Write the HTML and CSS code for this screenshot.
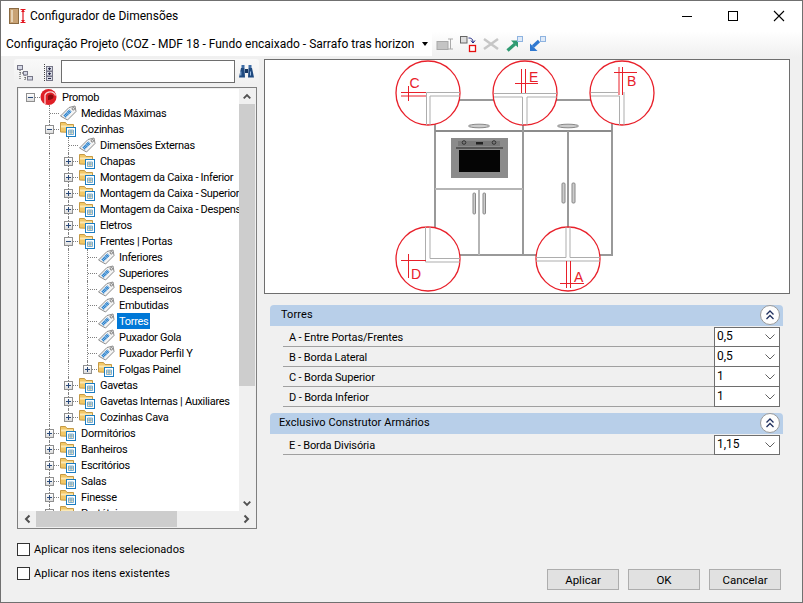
FILE: index.html
```html
<!DOCTYPE html>
<html lang="pt">
<head>
<meta charset="utf-8">
<title>Configurador de Dimensões</title>
<link rel="stylesheet" href="styles.css">
</head>
<body>
<svg class="defs" width="0" height="0">
  <symbol id="tag" viewBox="0 0 19 16">
    <path d="M1.500 11 10 2.500l6-1.500 1 5.500-8.500 8.500z" fill="#f4f4f4" stroke="#8c8c8c"/>
    <path d="M5.500 11.500 11.500 5.500" stroke="#1f7ccc" stroke-width="3.500" stroke-dasharray="1.200 .4"/>
    <circle cx="14.300" cy="3.800" r="1.200" fill="#fff" stroke="#777"/>
  </symbol>
  <symbol id="folder" viewBox="0 0 19 16">
    <path d="M1.500 11V1.500h5l1.500 2h6.500v8z" fill="#f3c867" stroke="#c59a45"/>
    <path d="M2 5.500h12" stroke="#fbe8b4" stroke-width="2"/>
    <rect x="7.500" y="6.500" width="9" height="9" fill="#fff" stroke="#1b7cc0"/>
    <path d="M9.500 9h5v4.500h-5zM12 9v4.500M9.500 11h5" fill="#fde5b6" stroke="#5aa0d0" stroke-width=".8"/>
  </symbol>
  <symbol id="logo" viewBox="0 0 19 16">
    <circle cx="8.500" cy="8" r="8" fill="#df1f26"/>
    <path d="M5 15V6C7 1.500 14 2 15.500 6.500" fill="none" stroke="#fbd5d6" stroke-width="1.300"/>
    <path d="M8 11V7c2-2.500 6-1.500 5.500 1-.4 2.200-3.500 3-5.500 3z" fill="#8a0c10"/>
  </symbol>
  <symbol id="chev-up" viewBox="0 0 16 16"><path d="M4.500 10 8 6.500 11.500 10" fill="none" stroke="#505050" stroke-width="2"/></symbol>
  <symbol id="chev-down" viewBox="0 0 16 16"><path d="M4.500 6 8 9.500 11.500 6" fill="none" stroke="#505050" stroke-width="2"/></symbol>
  <symbol id="chev-left" viewBox="0 0 16 16"><path d="M10 4.500 6.500 8 10 11.500" fill="none" stroke="#505050" stroke-width="2"/></symbol>
  <symbol id="chev-right" viewBox="0 0 16 16"><path d="M6 4.500 9.500 8 6 11.500" fill="none" stroke="#505050" stroke-width="2"/></symbol>
  <symbol id="dd" viewBox="0 0 12 8"><path d="M1.500 1.500 6 6l4.500-4.500" fill="none" stroke="#606060"/></symbol>
  <symbol id="collapse" viewBox="0 0 24 22">
    <circle cx="12" cy="11" r="9.500" fill="#fdfdfd" stroke="#9a9a9a"/>
    <path d="M8.500 10.500 12 7l3.500 3.500M8.500 15 12 11.500 15.500 15" fill="none" stroke="#1f2f5f" stroke-width="1.300"/>
  </symbol>
</svg>

<div class="window">
  <header class="titlebar">
    <svg class="title-icon" viewBox="0 0 18 17" width="18" height="17">
      <rect x=".5" y=".5" width="9" height="15" fill="#c8a274" stroke="#8a6a42"/>
      <rect x="2" y="2" width="2" height="12" fill="#e6d2b5"/>
      <path d="M14 1v14M11.500 1.500h5M11.500 14.500h5" stroke="#e3141e" stroke-width="1.200" fill="none"/>
      <path d="M12 4l2-2.500L16 4zM12 12l2 2.500 2-2.500z" fill="#e3141e"/>
    </svg>
    <span class="title-text">Configurador de Dimensões</span>
    <div class="win-buttons">
      <svg viewBox="0 0 12 12" width="12" height="12"><path d="M1 6.500h10" stroke="#000"/></svg>
      <svg viewBox="0 0 12 12" width="12" height="12"><rect x="1.500" y="1.500" width="9" height="9" fill="none" stroke="#000"/></svg>
      <svg viewBox="0 0 12 12" width="12" height="12"><path d="M1 1l10 10M11 1 1 11" stroke="#000" stroke-width="1.100"/></svg>
    </div>
  </header>

  <div class="toolbar">
    <div class="combo">
      <span class="combo-text">Configuração Projeto (COZ - MDF 18 - Fundo encaixado - Sarrafo tras horizontal)</span>
      <span class="combo-arrow"></span>
    </div>
    <div class="tools">
      <svg viewBox="0 0 18 18" width="18" height="18"><rect x="1" y="6.500" width="11" height="8" fill="#c4c4c4" stroke="#a8a8a8"/><path d="M12 4h5M14.500 4v10M12 14h5" stroke="#aaa" fill="none"/></svg>
      <svg viewBox="0 0 18 18" width="18" height="18"><rect x="1.500" y="1.500" width="6.500" height="6.500" fill="#ddd" stroke="#666"/><rect x="10.500" y="10.500" width="6" height="6" fill="#fff" stroke="#e51010" stroke-width="1.300"/><path d="M9.500 3c3 0 4.500 1 4.500 4.500M12 5.500 14 8l2-2.500" stroke="#141c7c" fill="none"/></svg>
      <svg viewBox="0 0 18 18" width="18" height="18"><path d="M2 4l14 10M16 4 2 14" stroke="#c6c6c6" stroke-width="2.500"/></svg>
      <svg viewBox="0 0 18 18" width="18" height="18"><path d="M2.500 15.500 10 9" stroke="#2f9a72" stroke-width="3.200"/><path d="M6 5.500h7v7z" fill="#2f9a72"/><rect x="12.500" y="1.500" width="5" height="5" fill="#dfeaf8" stroke="#8eb3e0"/></svg>
      <svg viewBox="0 0 18 18" width="18" height="18"><path d="M11 6 5 11.500" stroke="#2f78d0" stroke-width="3.200"/><path d="M2 8.500V16h7.500z" fill="#2f78d0"/><rect x="12.500" y="1.500" width="5" height="5" fill="#dfeaf8" stroke="#8eb3e0"/></svg>
    </div>
  </div>

  <div class="main">
    <aside class="left">
      <div class="search-bar">
        <svg viewBox="0 0 16 18" width="16" height="18"><path d="M3 5v12M3 10h3M8 10v7M8 15h3" stroke="#444" stroke-dasharray="1 1" fill="none"/><rect x=".5" y="2.500" width="5" height="4" fill="#d6d9e6" stroke="#778"/><rect x="6.500" y="8.500" width="4" height="3.500" fill="#d6d9e6" stroke="#778"/><rect x="10.500" y="13.500" width="5" height="3.500" fill="#d6d9e6" stroke="#778"/></svg>
        <svg viewBox="0 0 16 18" width="16" height="18"><path d="M4.500 1v17" stroke="#444" stroke-dasharray="1 1"/><rect x="6.500" y="3.500" width="6" height="4.500" fill="#d8dbe4" stroke="#778"/><rect x="6.500" y="8.500" width="6" height="4.500" fill="#d8dbe4" stroke="#778"/><rect x="6.500" y="13.500" width="6" height="4" fill="#d8dbe4" stroke="#778"/><path d="M8 5.700h3M9.500 4.500v2.500M8 10.700h3M9.500 9.500v2.500M8 15.500h3" stroke="#224"/></svg>
        <input class="search" type="text" aria-label="Pesquisar">
        <svg class="binoc" viewBox="0 0 17 15" width="17" height="15"><path d="M1 13.500 3 4h3.500l.5 9.500zM10 13.500 10.500 4H14l2 9.500z" fill="#1f4a80"/><rect x="3.500" y="1" width="3" height="3" fill="#3f6da5"/><rect x="10.500" y="1" width="3" height="3" fill="#3f6da5"/><rect x="7" y="5" width="3" height="4" fill="#153560"/><path d="M2.800 7.500v4M12.500 7.500v4" stroke="#9fc0e6"/></svg>
      </div>

      <div class="tree">
        <div class="viewport">
          <div class="row"><span class="c root"><i class="box minus"></i></span><svg class="ico"><use href="#logo"/></svg><span class="lbl">Promob</span></div>
          <div class="row"><span class="c"></span><span class="c tee"></span><svg class="ico"><use href="#tag"/></svg><span class="lbl">Medidas Máximas</span></div>

          <div class="row"><span class="c"></span><span class="c tee"><i class="box minus"></i></span><svg class="ico"><use href="#folder"/></svg><span class="lbl">Cozinhas</span></div>
          <div class="row"><span class="c"></span><span class="c ln"></span><span class="c tee"></span><svg class="ico"><use href="#tag"/></svg><span class="lbl">Dimensões Externas</span></div>
          <div class="row"><span class="c"></span><span class="c ln"></span><span class="c tee"><i class="box plus"></i></span><svg class="ico"><use href="#folder"/></svg><span class="lbl">Chapas</span></div>
          <div class="row"><span class="c"></span><span class="c ln"></span><span class="c tee"><i class="box plus"></i></span><svg class="ico"><use href="#folder"/></svg><span class="lbl">Montagem da Caixa - Inferior</span></div>
          <div class="row"><span class="c"></span><span class="c ln"></span><span class="c tee"><i class="box plus"></i></span><svg class="ico"><use href="#folder"/></svg><span class="lbl">Montagem da Caixa - Superior</span></div>
          <div class="row"><span class="c"></span><span class="c ln"></span><span class="c tee"><i class="box plus"></i></span><svg class="ico"><use href="#folder"/></svg><span class="lbl">Montagem da Caixa - Despenseiro</span></div>
          <div class="row"><span class="c"></span><span class="c ln"></span><span class="c tee"><i class="box plus"></i></span><svg class="ico"><use href="#folder"/></svg><span class="lbl">Eletros</span></div>
          <div class="row"><span class="c"></span><span class="c ln"></span><span class="c tee"><i class="box minus"></i></span><svg class="ico"><use href="#folder"/></svg><span class="lbl">Frentes | Portas</span></div>

          <div class="row"><span class="c"></span><span class="c ln"></span><span class="c ln"></span><span class="c tee"></span><svg class="ico"><use href="#tag"/></svg><span class="lbl">Inferiores</span></div>
          <div class="row"><span class="c"></span><span class="c ln"></span><span class="c ln"></span><span class="c tee"></span><svg class="ico"><use href="#tag"/></svg><span class="lbl">Superiores</span></div>
          <div class="row"><span class="c"></span><span class="c ln"></span><span class="c ln"></span><span class="c tee"></span><svg class="ico"><use href="#tag"/></svg><span class="lbl">Despenseiros</span></div>
          <div class="row"><span class="c"></span><span class="c ln"></span><span class="c ln"></span><span class="c tee"></span><svg class="ico"><use href="#tag"/></svg><span class="lbl">Embutidas</span></div>
          <div class="row"><span class="c"></span><span class="c ln"></span><span class="c ln"></span><span class="c tee"></span><svg class="ico"><use href="#tag"/></svg><span class="lbl sel">Torres</span></div>
          <div class="row"><span class="c"></span><span class="c ln"></span><span class="c ln"></span><span class="c tee"></span><svg class="ico"><use href="#tag"/></svg><span class="lbl">Puxador Gola</span></div>
          <div class="row"><span class="c"></span><span class="c ln"></span><span class="c ln"></span><span class="c tee"></span><svg class="ico"><use href="#tag"/></svg><span class="lbl">Puxador Perfil Y</span></div>
          <div class="row"><span class="c"></span><span class="c ln"></span><span class="c ln"></span><span class="c end"><i class="box plus"></i></span><svg class="ico"><use href="#folder"/></svg><span class="lbl">Folgas Painel</span></div>

          <div class="row"><span class="c"></span><span class="c ln"></span><span class="c tee"><i class="box plus"></i></span><svg class="ico"><use href="#folder"/></svg><span class="lbl">Gavetas</span></div>
          <div class="row"><span class="c"></span><span class="c ln"></span><span class="c tee"><i class="box plus"></i></span><svg class="ico"><use href="#folder"/></svg><span class="lbl">Gavetas Internas | Auxiliares</span></div>
          <div class="row"><span class="c"></span><span class="c ln"></span><span class="c end"><i class="box plus"></i></span><svg class="ico"><use href="#folder"/></svg><span class="lbl">Cozinhas Cava</span></div>

          <div class="row"><span class="c"></span><span class="c tee"><i class="box plus"></i></span><svg class="ico"><use href="#folder"/></svg><span class="lbl">Dormitórios</span></div>
          <div class="row"><span class="c"></span><span class="c tee"><i class="box plus"></i></span><svg class="ico"><use href="#folder"/></svg><span class="lbl">Banheiros</span></div>
          <div class="row"><span class="c"></span><span class="c tee"><i class="box plus"></i></span><svg class="ico"><use href="#folder"/></svg><span class="lbl">Escritórios</span></div>
          <div class="row"><span class="c"></span><span class="c tee"><i class="box plus"></i></span><svg class="ico"><use href="#folder"/></svg><span class="lbl">Salas</span></div>
          <div class="row"><span class="c"></span><span class="c tee"><i class="box plus"></i></span><svg class="ico"><use href="#folder"/></svg><span class="lbl">Finesse</span></div>
          <div class="row"><span class="c"></span><span class="c tee"><i class="box plus"></i></span><svg class="ico"><use href="#folder"/></svg><span class="lbl">Portáteis</span></div>
        </div>
        <div class="vbar">
          <svg class="arrow-v"><use href="#chev-up"/></svg>
          <div class="vthumb"></div>
          <div class="spacer"></div>
          <svg class="arrow-v"><use href="#chev-down"/></svg>
        </div>
        <div class="hbar">
          <svg class="arrow-h"><use href="#chev-left"/></svg>
          <div class="hthumb"></div>
          <div class="spacer"></div>
          <svg class="arrow-h"><use href="#chev-right"/></svg>
        </div>
      </div>

      <div class="checks">
        <label class="check"><span class="cb"></span>Aplicar nos itens selecionados</label>
        <label class="check"><span class="cb"></span>Aplicar nos itens existentes</label>
      </div>
    </aside>

    <section class="right">
      <div class="preview">
        <svg class="drawing" viewBox="265 60 524 233" width="524" height="233">
          <g fill="none" stroke="#999" stroke-width="2">
            <path d="M435 100V255H612V100H435"/>
            <path d="M435 131H612" stroke="#8c8c8c"/>
            <path d="M523 100V255M568 131V255"/>
            <path d="M435 189H523" stroke="#b5b5b5"/>
            <path d="M479 189V255" stroke="#b5b5b5"/>
          </g>
          <g fill="#ccc" stroke="#888">
            <ellipse cx="479" cy="126" rx="10.500" ry="1.800"/>
            <ellipse cx="568" cy="126" rx="10.500" ry="1.800"/>
            <rect x="473" y="193" width="2.500" height="21" rx="1"/>
            <rect x="483" y="193" width="2.500" height="21" rx="1"/>
            <rect x="562" y="183" width="3" height="20" rx="1"/>
            <rect x="572" y="183" width="3" height="20" rx="1"/>
          </g>
          <rect x="451" y="138" width="57" height="40" fill="#8b8b8b"/>
          <rect x="459" y="150" width="41" height="22" fill="#050505"/>
          <path d="M456 148H503" stroke="#222" stroke-width="1.200"/>
          <rect x="458" y="141" width="42" height="5" fill="#777"/>
          <rect x="476" y="142" width="7" height="2.500" fill="#222"/>
          <circle cx="464" cy="142.500" r="1.800" fill="none" stroke="#333"/>
          <circle cx="494" cy="142.500" r="1.800" fill="none" stroke="#333"/>

          <g fill="#fff" stroke="#e8202a" stroke-width="1.300">
            <circle cx="428" cy="93" r="32"/>
            <circle cx="525" cy="93" r="32"/>
            <circle cx="622" cy="93" r="32"/>
            <circle cx="428" cy="259" r="32"/>
            <circle cx="568" cy="259" r="32"/>
          </g>
          <g fill="none" stroke="#adadad">
            <path d="M460 92.500H426.500V125M460 96H430V125"/>
            <path d="M494 93.500H557M494 97H522.500V125M557 97H527V125"/>
            <path d="M591 92.500H618M591 96H619.500V125M624 92V125"/>
            <path d="M425.500 227V262H460M430 227V258.500H460"/>
            <path d="M536 257.500H566V227M600 257.500H570V227M536 261H600"/>
          </g>
          <g fill="none" stroke="#e8202a">
            <path d="M401 92.500H426M401 96H426M408.500 86V101"/>
            <path d="M521.500 69V93M525.500 69V93M515 83.500H538"/>
            <path d="M614 72.500H637M619 67V95M622.500 67V95"/>
            <path d="M401 260.500H426M408.500 254V278"/>
            <path d="M566.500 261V288M570.500 261V288M560 283.500H584"/>
          </g>
          <g class="drawing-labels">
            <text x="409.500" y="88">C</text>
            <text x="529" y="82">E</text>
            <text x="627" y="86">B</text>
            <text x="411" y="279">D</text>
            <text x="574" y="282">A</text>
          </g>
        </svg>
      </div>

      <div class="group">
        <div class="group-head"><span class="head-t1">Torres</span><svg class="collapse"><use href="#collapse"/></svg></div>
        <div class="prop"><span class="prop-name">A - Entre Portas/Frentes</span><div class="select"><span>0,5</span><svg class="dd"><use href="#dd"/></svg></div></div>
        <div class="prop"><span class="prop-name">B - Borda Lateral</span><div class="select"><span>0,5</span><svg class="dd"><use href="#dd"/></svg></div></div>
        <div class="prop"><span class="prop-name">C - Borda Superior</span><div class="select"><span>1</span><svg class="dd"><use href="#dd"/></svg></div></div>
        <div class="prop"><span class="prop-name">D - Borda Inferior</span><div class="select"><span>1</span><svg class="dd"><use href="#dd"/></svg></div></div>
      </div>

      <div class="group">
        <div class="group-head"><span>Exclusivo Construtor Armários</span><svg class="collapse"><use href="#collapse"/></svg></div>
        <div class="prop"><span class="prop-name">E - Borda Divisória</span><div class="select"><span>1,15</span><svg class="dd"><use href="#dd"/></svg></div></div>
      </div>

      <div class="actions">
        <button class="btn" type="button">Aplicar</button>
        <button class="btn" type="button">OK</button>
        <button class="btn" type="button">Cancelar</button>
      </div>
    </section>
  </div>
</div>
</body>
</html>
```
FILE: styles.css
```css
* { box-sizing: border-box; }
html, body { margin: 0; padding: 0; }
body {
  width: 803px;
  height: 603px;
  overflow: hidden;
  font-family: Roboto, "Liberation Sans", sans-serif;
  font-size: 12px;
  color: #000;
}
.defs { display: block; height: 0; width: 0; overflow: hidden; }

.window {
  width: 803px;
  height: 603px;
  border: 1px solid #707070;
  background: #f0f0f0;
  display: flex;
  flex-direction: column;
}

.titlebar {
  height: 30px;
  flex: none;
  background: #fff;
  display: flex;
  align-items: center;
  padding-left: 8px;
}
.title-icon { margin-right: 3px; }
.win-buttons { margin-left: auto; display: flex; gap: 34px; padding-right: 17px; align-items: center; }

.toolbar {
  height: 26px;
  flex: none;
  display: flex;
  align-items: center;
  background: linear-gradient(to bottom, #fff, #f0f0f0);
}
.combo {
  width: 431px;
  height: 24px;
  background: #fff;
  display: flex;
  align-items: center;
  padding-left: 5px;
}
.combo-text { width: 408px; overflow: hidden; white-space: nowrap; }
.combo-arrow {
  margin-left: 8px;
  border-left: 3.5px solid transparent;
  border-right: 3.5px solid transparent;
  border-top: 4px solid #000;
}
.tools { display: flex; align-items: center; gap: 5px; margin-left: 4px; }

.main { flex: 1; display: flex; min-height: 0; padding-top: 2px; }

.left { width: 263px; flex: none; display: flex; flex-direction: column; padding-left: 13px; }
.search-bar {
  width: 245px;
  height: 25px;
  display: flex;
  align-items: center;
  padding-left: 3px;
  gap: 7px;
  background: linear-gradient(to bottom, #f9f9f9, #f0f0f0);
  border-radius: 3px;
}
.search {
  width: 174px;
  height: 23px;
  margin: 0 0 0 -2px;
  border: 1px solid #6e6e6e;
  background: #fff;
  padding: 0;
  outline: none;
}
.binoc { margin-left: -4px; }

.tree {
  margin: 3px 0 0 3px;
  width: 240px;
  height: 442px;
  border: 1px solid #7f7f7f;
  background: #f0f0f0;
  padding: 1px;
  display: grid;
  grid-template-columns: 220px 16px;
  grid-template-rows: 422px 16px;
  font-size: 11px;
  letter-spacing: -.3px;
}
.viewport { background: #fff; overflow: hidden; padding-left: 2px; }
.vbar { display: flex; flex-direction: column; background: #f0f0f0; }
.hbar { grid-column: 1 / span 2; display: flex; background: #f0f0f0; }
.arrow-v { width: 16px; height: 15px; flex: none; }
.arrow-h { width: 17px; height: 16px; flex: none; }
.vthumb { height: 282px; background: #cdcdcd; flex: none; }
.hthumb { width: 141px; background: #cdcdcd; flex: none; }
.spacer { flex: 1; }

.row { height: 16px; display: flex; align-items: center; white-space: nowrap; }
.c { width: 19px; height: 16px; flex: none; position: relative; display: flex; align-items: center; justify-content: center; }
.ln::before, .tee::before, .end::before {
  content: "";
  position: absolute;
  left: 9px;
  border-left: 1px dotted #808080;
}
.ln::before, .tee::before { top: 0; bottom: 0; }
.end::before { top: 0; height: 8px; }
.tee::after, .end::after, .root::after {
  content: "";
  position: absolute;
  left: 10px;
  right: 0;
  top: 8px;
  border-top: 1px dotted #808080;
}
.box {
  position: relative;
  z-index: 1;
  width: 9px;
  height: 9px;
  border: 1px solid #8f8f8f;
  background: linear-gradient(to bottom, #fff, #dcdcdc);
  display: block;
  margin-left: -1px;
}
.box::before {
  content: "";
  position: absolute;
  left: 1px;
  top: 3px;
  width: 5px;
  height: 1px;
  background: #2a4a7a;
}
.plus::after {
  content: "";
  position: absolute;
  left: 3px;
  top: 1px;
  width: 1px;
  height: 5px;
  background: #2a4a7a;
}
.ico { width: 19px; height: 16px; flex: none; }
.lbl { margin-left: 1px; padding: 1px 2px 0; height: 16px; line-height: 15px; }
.sel { background: #0078d7; color: #fff; }

.checks { margin-top: 13px; display: flex; flex-direction: column; gap: 10px; padding-left: 3px; font-size: 11px; letter-spacing: .05px; }
.check { display: flex; align-items: center; height: 14px; }
.cb { width: 13px; height: 13px; border: 1px solid #333; background: #fff; margin-right: 4px; flex: none; }

.right { flex: 1; display: flex; flex-direction: column; min-width: 0; }
.preview {
  width: 526px;
  height: 235px;
  border: 1px solid #6e6e6e;
  background: #fff;
  flex: none;
}
.drawing { display: block; }
.drawing-labels { font-family: "Liberation Sans", sans-serif; font-size: 14px; fill: #e8202a; }

.group { margin-left: 6px; width: 513px; }
.preview + .group { margin-top: 11px; }
.group + .group { margin-top: 6px; }
.group-head {
  height: 21px;
  background: #b8cfe9;
  border-radius: 4px 4px 0 0;
  display: flex;
  align-items: center;
  padding-left: 9px;
  padding-bottom: 3px;
  margin-bottom: 1px;
  font-size: 11px;
  letter-spacing: .08px;
}
.head-t1 { margin-left: 2px; }
.collapse { width: 24px; height: 22px; margin: 0 1px -2px auto; flex: none; }
.prop {
  height: 20px;
  margin-left: 13px;
  margin-right: 3px;
  display: flex;
  align-items: stretch;
}
.prop-name {
  flex: 1;
  padding-left: 6px;
  line-height: 21px;
  border-bottom: 1px solid #a0a0a0;
  font-size: 11px;
  letter-spacing: -.14px;
}
.select {
  width: 66px;
  border: 1px solid #6e6e6e;
  background: #fff;
  display: flex;
  align-items: center;
  justify-content: space-between;
  padding: 0 3px 2px 2px;
}
.prop + .prop .select { border-top: 0; }
.dd { width: 12px; height: 8px; flex: none; margin-top: 2px; }

.actions { margin-top: auto; margin-bottom: 12px; display: flex; gap: 9px; padding-left: 283px; }
.btn {
  width: 72px;
  height: 21px;
  border: 1px solid #adadad;
  background: #e1e1e1;
  font: inherit;
  font-size: 11.5px;
  color: #000;
  padding: 0;
}
```
